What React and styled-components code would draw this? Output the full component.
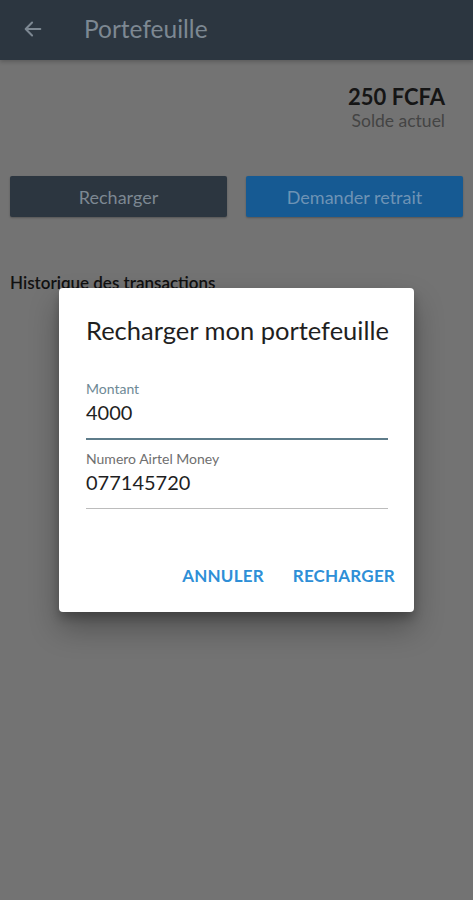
import React from 'react';
import styled, { createGlobalStyle } from 'styled-components';

const GlobalStyle = createGlobalStyle`
    html, body {
        margin: 0;
        padding: 0;
        background: #737373;
        font-family: Lato, "Open Sans", sans-serif;
    }
`;

const Screen = styled.div`
    position: relative;
    width: 473px;
    height: 900px;
    background: #737373;
    overflow: hidden;
`;

const AppBar = styled.div`
    height: 60px;
    background: #2c3640;
    display: flex;
    align-items: center;
    box-shadow: 0 2px 4px rgba(0,0,0,0.2);
`;

const BackButton = styled.div`
    width: 84px;
    padding-left: 22px;
    padding-bottom: 3px;
    box-sizing: border-box;
    display: flex;
    align-items: center;
    color: #7d8892;
`;

const BarTitle = styled.h1`
    margin: 0 0 3px 0;
    font-size: 24.5px;
    font-weight: 400;
    color: #7d8892;
`;

const Content = styled.div`
    padding: 0 10px 0 10px;
`;

const Balance = styled.div`
    display: flex;
    flex-direction: column;
    align-items: flex-end;
    padding: 23px 18px 0 0;
`;

const Amount = styled.div`
    font-size: 22px;
    font-weight: 700;
    color: #151515;
    line-height: 27px;
`;

const AmountLabel = styled.div`
    font-size: 17.5px;
    color: #444;
    line-height: 21px;
`;

const Actions = styled.div`
    display: grid;
    grid-template-columns: 1fr 1fr;
    gap: 19px;
    margin-top: 45px;
`;

const ActionButton = styled.div`
    height: 41px;
    border-radius: 2px;
    background: ${props => props.bg};
    color: ${props => props.fg};
    font-size: 18px;
    display: flex;
    align-items: center;
    justify-content: center;
    box-shadow: 0 1px 2px rgba(0,0,0,0.25);
`;

const SectionTitle = styled.div`
    margin-top: 55px;
    font-size: 17px;
    font-weight: 600;
    color: #111;
`;

const Dialog = styled.div`
    position: absolute;
    left: 59px;
    top: 288px;
    width: 355px;
    height: 324px;
    box-sizing: border-box;
    background: #fff;
    border-radius: 4px;
    padding: 26px 26px 0 27px;
    display: flex;
    flex-direction: column;
    box-shadow: 0 16px 30px rgba(0,0,0,0.3), 0 6px 10px rgba(0,0,0,0.22);
`;

const DialogTitle = styled.h2`
    margin: 0 -12px 0 0;
    font-size: 25.5px;
    font-weight: 400;
    color: #1f1f1f;
    line-height: 32px;
    white-space: nowrap;
`;

const Field = styled.div`
    margin-top: ${props => props.top}px;
    border-bottom: ${props => props.focused ? '2px solid #5e7c8a' : '1px solid #bcbcbc'};
    padding-bottom: ${props => props.focused ? 14 : 14}px;
`;

const FieldLabel = styled.div`
    font-size: 14px;
    line-height: 18px;
    color: ${props => props.focused ? '#6e8995' : '#6f6f6f'};
`;

const FieldValue = styled.div`
    margin-top: 2px;
    font-size: 20px;
    line-height: 24px;
    color: #1f1f1f;
`;

const DialogActions = styled.div`
    margin-top: auto;
    margin-bottom: 26px;
    margin-right: -7px;
    display: flex;
    justify-content: flex-end;
    gap: 29px;
`;

const TextButton = styled.div`
    font-size: 17px;
    font-weight: 700;
    color: #2e8fd7;
    letter-spacing: 0.2px;
`;

const ArrowLeft = () => (
    <svg width="22" height="22" viewBox="0 0 24 24" fill="none" stroke="currentColor" strokeWidth="2.2" strokeLinecap="round" strokeLinejoin="round">
        <path d="M20 12H5" />
        <path d="M11 5l-7 7 7 7" />
    </svg>
);

const App = () => {
    return (
        <Screen>
            <GlobalStyle />
            <AppBar>
                <BackButton>
                    <ArrowLeft />
                </BackButton>
                <BarTitle>Portefeuille</BarTitle>
            </AppBar>
            <Content>
                <Balance>
                    <Amount>250 FCFA</Amount>
                    <AmountLabel>Solde actuel</AmountLabel>
                </Balance>
                <Actions>
                    <ActionButton bg="#2c3640" fg="#7d8892">Recharger</ActionButton>
                    <ActionButton bg="#165a93" fg="#6e93b5">Demander retrait</ActionButton>
                </Actions>
                <SectionTitle>Historique des transactions</SectionTitle>
            </Content>
            <Dialog>
                <DialogTitle>Recharger mon portefeuille</DialogTitle>
                <Field top={34} focused>
                    <FieldLabel focused>Montant</FieldLabel>
                    <FieldValue>4000</FieldValue>
                </Field>
                <Field top={10}>
                    <FieldLabel>Numero Airtel Money</FieldLabel>
                    <FieldValue>077145720</FieldValue>
                </Field>
                <DialogActions>
                    <TextButton>ANNULER</TextButton>
                    <TextButton>RECHARGER</TextButton>
                </DialogActions>
            </Dialog>
        </Screen>
    );
};

export default App;
